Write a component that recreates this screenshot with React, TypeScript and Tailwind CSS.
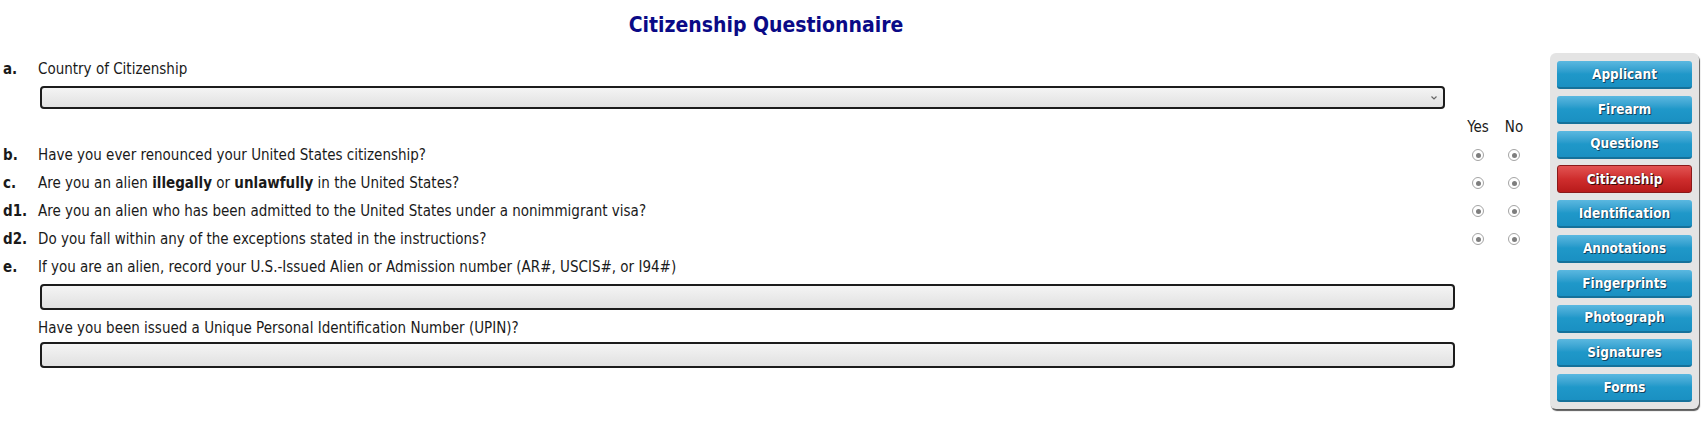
import React from "react";

const FONT = { fontFamily: '"DejaVu Sans Condensed", "DejaVu Sans", Tahoma, sans-serif' };

function Radio() {
  return (
    <span className="flex h-[12px] w-[12px] items-center justify-center rounded-full border-[1.5px] border-[#a4a4a4] bg-white">
      <span className="h-[5px] w-[5px] rounded-full bg-[#7e7e7e]" />
    </span>
  );
}

function RadioPair() {
  return (
    <div className="flex w-[72px] shrink-0">
      <div className="flex w-[36px] justify-center">
        <Radio />
      </div>
      <div className="flex w-[36px] justify-center">
        <Radio />
      </div>
    </div>
  );
}

function Row({ label, children, radios }: { label?: string; children: React.ReactNode; radios?: boolean }) {
  return (
    <div className="flex h-[28px] items-center">
      <div className="w-[38px] shrink-0 pl-[3px] font-bold">{label}</div>
      <div className="flex-1 whitespace-nowrap">{children}</div>
      {radios && <RadioPair />}
    </div>
  );
}

const navItems = [
  "Applicant",
  "Firearm",
  "Questions",
  "Citizenship",
  "Identification",
  "Annotations",
  "Fingerprints",
  "Photograph",
  "Signatures",
  "Forms",
];

export default function App() {
  return (
    <div className="flex h-[442px] w-[1701px] bg-white text-[15px] text-[#1a1a1a] font-stretch-condensed" style={FONT}>
      <div className="w-[1532px] shrink-0">
        <div className="flex h-[55px] justify-center pt-[11px]">
          <h1 className="text-[21px] font-bold leading-[28px] text-[#0a0a86]">Citizenship Questionnaire</h1>
        </div>

        <Row label="a.">Country of Citizenship</Row>
        <div className="mt-[3px] ml-[40px] flex h-[23px] w-[1405px] items-center justify-end rounded-[4px] border-2 border-[#1c1c1c] bg-gradient-to-b from-[#f4f4f4] to-[#e1e1e1] pr-[5px]">
          <svg width="8" height="6" viewBox="0 0 8 6" className="mt-[1px]">
            <path d="M1.5 1.5 L4 4 L6.5 1.5" fill="none" stroke="#666" strokeWidth="1.2" />
          </svg>
        </div>

        <div className="mt-[4px] flex h-[28px] items-center justify-end">
          <div className="flex w-[72px] shrink-0">
            <div className="w-[36px] text-center">Yes</div>
            <div className="w-[36px] text-center">No</div>
          </div>
        </div>

        <Row label="b." radios>
          Have you ever renounced your United States citizenship?
        </Row>
        <Row label="c." radios>
          Are you an alien <b>illegally</b> or <b>unlawfully</b> in the United States?
        </Row>
        <Row label="d1." radios>
          Are you an alien who has been admitted to the United States under a nonimmigrant visa?
        </Row>
        <Row label="d2." radios>
          Do you fall within any of the exceptions stated in the instructions?
        </Row>
        <Row label="e.">
          If you are an alien, record your U.S.-Issued Alien or Admission number (AR#, USCIS#, or I94#)
        </Row>
        <div className="mt-[3px] ml-[40px] h-[26px] w-[1415px] rounded-[4px] border-2 border-[#1c1c1c] bg-gradient-to-b from-[#f4f4f4] to-[#e1e1e1]" />
        <div className="mt-[4px]">
          <Row>Have you been issued a Unique Personal Identification Number (UPIN)?</Row>
        </div>
        <div className="ml-[40px] h-[26px] w-[1415px] rounded-[4px] border-2 border-[#1c1c1c] bg-gradient-to-b from-[#f4f4f4] to-[#e1e1e1]" />
      </div>

      <div className="ml-[18px] mt-[53px] self-start">
        <div className="flex w-[149px] flex-col gap-[6.8px] rounded-[6px] bg-[#e4e4e4] px-[7px] pt-[8px] pb-[7px] shadow-[1px_2px_1px_#5a5a5a]">
          {navItems.map((item) => {
            const active = item === "Citizenship";
            return (
              <div
                key={item}
                className={
                  active
                    ? "flex h-[28px] items-center justify-center rounded-[3px] border border-[#8a1a1a] bg-gradient-to-b from-[#e25252] via-[#cf2d2d] to-[#b81a1a] text-[13.5px] font-bold text-white [text-shadow:1px_1px_0_#3a0a0a,0_0_1px_#3a0a0a]"
                    : "flex h-[28px] items-center justify-center rounded-[3px] border-b-2 border-[#15719a] bg-gradient-to-b from-[#5ab8e0] via-[#1f98c9] to-[#1a90c2] text-[13.5px] font-bold text-white [text-shadow:1px_1px_0_#124560,0_0_1px_#124560]"
                }
              >
                {item}
              </div>
            );
          })}
        </div>
      </div>
    </div>
  );
}
